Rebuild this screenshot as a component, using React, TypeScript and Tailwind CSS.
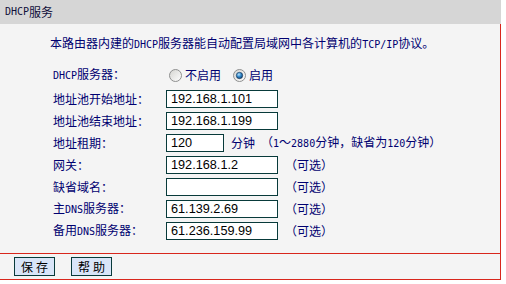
import React from 'react';

const cjk = "font-['Noto_Sans_CJK_SC',sans-serif]";

// SimSun-like look: ASCII runs inside Chinese text are drawn in a narrow mono face
function Mixed({ text }: { text: string }) {
  const parts = text.split(/([\x21-\x7e]+)/);
  return (
    <>
      {parts.map((p, i) =>
        /^[\x21-\x7e]+$/.test(p) ? (
          <span key={i} className="font-['DejaVu_Sans_Mono',monospace] text-[10px]">
            {p}
          </span>
        ) : (
          <React.Fragment key={i}>{p}</React.Fragment>
        )
      )}
    </>
  );
}

function Radio({ checked }: { checked?: boolean }) {
  const id = checked ? 'r-on' : 'r-off';
  return (
    <svg width="13" height="13" viewBox="0 0 13 13" className="shrink-0">
      <defs>
        <linearGradient id={`${id}-bg`} x1="0" y1="0" x2="1" y2="1">
          <stop offset="0" stopColor="#d4d4d0" />
          <stop offset="1" stopColor="#ffffff" />
        </linearGradient>
        <radialGradient id={`${id}-dot`} cx="0.4" cy="0.35" r="0.7">
          <stop offset="0" stopColor="#b8e4ff" />
          <stop offset="0.5" stopColor="#2f86c8" />
          <stop offset="1" stopColor="#0c3f70" />
        </radialGradient>
      </defs>
      <circle cx="6.5" cy="6.5" r="6" fill={`url(#${id}-bg)`} stroke="#8e8f8f" strokeWidth="1" />
      {checked && <circle cx="6.5" cy="6.5" r="3.2" fill={`url(#${id}-dot)`} stroke="#1a3350" strokeWidth="0.6" />}
    </svg>
  );
}

function Field({ value, w = 'w-[112px]' }: { value: string; w?: string }) {
  return (
    <div
      className={`${w} h-[18px] bg-white border border-[#083a3a] pl-[4px] flex items-center text-[12.7px] text-black font-['Liberation_Sans',Arial,sans-serif] leading-none`}
    >
      {value}
    </div>
  );
}

function Row({ label, children }: { label: string; children: React.ReactNode }) {
  return (
    <div className="flex items-center h-[22px]">
      <div className="w-[113px] shrink-0">
        <Mixed text={label} />
      </div>
      <div className="flex items-center">{children}</div>
    </div>
  );
}

function Opt() {
  return <span className="ml-[7px]">（可选）</span>;
}

export default function App() {
  return (
    <div className={`w-[506px] h-[284px] bg-white ${cjk} text-[12px] text-[#000070] leading-[16px]`}>
      <div className="w-[501px] h-[24px] bg-[#d6d6d6] pl-[5px] flex items-center text-[#10103a]">
        <Mixed text="DHCP服务" />
      </div>

      <div className="w-[501px] bg-[#f4f4f4] border-r border-[#d8261c]">
        <div className="h-[229px] pt-[11px]">
          <div className="pl-[50px] h-[16px]">
            <Mixed text="本路由器内建的DHCP服务器能自动配置局域网中各计算机的TCP/IP协议。" />
          </div>

          <div className="pl-[53px] mt-[13px]">
            <Row label="DHCP服务器：">
              <div className="flex items-center pl-[3px]">
                <Radio />
                <span className="ml-[3px]">不启用</span>
                <span className="ml-[12px] flex items-center">
                  <Radio checked />
                  <span className="ml-[3px]">启用</span>
                </span>
              </div>
            </Row>
            <div className="mt-[2px]">
              <Row label="地址池开始地址：">
                <Field value="192.168.1.101" />
              </Row>
              <Row label="地址池结束地址：">
                <Field value="192.168.1.199" />
              </Row>
              <Row label="地址租期：">
                <Field value="120" w="w-[58px]" />
                <span className="ml-[7px]">分钟</span>
                <span className="ml-[6px]">
                  <Mixed text="（1～2880分钟，缺省为120分钟）" />
                </span>
              </Row>
              <Row label="网关：">
                <Field value="192.168.1.2" />
                <Opt />
              </Row>
              <Row label="缺省域名：">
                <Field value="" />
                <Opt />
              </Row>
              <Row label="主DNS服务器：">
                <Field value="61.139.2.69" />
                <Opt />
              </Row>
              <Row label="备用DNS服务器：">
                <Field value="61.236.159.99" />
                <Opt />
              </Row>
            </div>
          </div>
        </div>

        <div className="h-[27px] border-t border-b border-[#d8261c] flex items-center pl-[14px] gap-[16px]">
          <button className="w-[41px] h-[19px] bg-[#d9e5f8] border border-[#083a3a] text-black text-[12px] leading-none tracking-[3px] pl-[3px]">
            保存
          </button>
          <button className="w-[41px] h-[19px] bg-[#d9e5f8] border border-[#083a3a] text-black text-[12px] leading-none tracking-[3px] pl-[3px]">
            帮助
          </button>
        </div>
      </div>
    </div>
  );
}
